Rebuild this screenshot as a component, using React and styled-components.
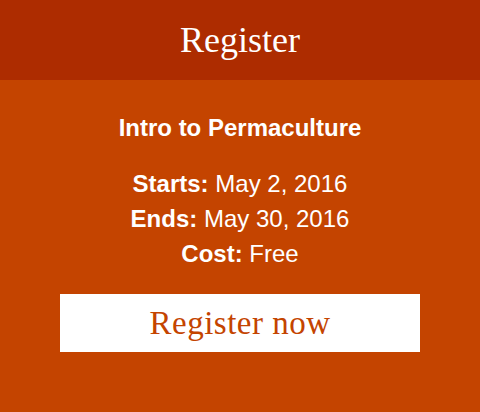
import styled, { createGlobalStyle } from "styled-components";

const GlobalStyle = createGlobalStyle`
  html, body {
    margin: 0;
    padding: 0;
    background: #c44400;
  }
`;

const Card = styled.section`
  width: 480px;
  height: 412px;
  background: #c44400;
  color: #fff;
  display: flex;
  flex-direction: column;
`;

const Header = styled.header`
  height: 80px;
  background: #ad2c00;
  display: flex;
  align-items: center;
  justify-content: center;
  h1 {
    margin: 0;
    font-family: "Liberation Serif", serif;
    font-weight: normal;
    font-size: 36px;
    line-height: 1;
  }
`;

const Body = styled.div`
  padding: 30px 60px 0;
  display: flex;
  flex-direction: column;
  align-items: stretch;
  text-align: center;
  font-family: "Liberation Sans", Arial, sans-serif;
  font-size: 24px;
  line-height: 35px;
`;

const Title = styled.h2`
  margin: 0 0 21px;
  font-size: 24px;
  font-weight: bold;
`;

const Details = styled.ul`
  list-style: none;
  margin: 0;
  padding: 0;
  b {
    font-weight: bold;
  }
`;

const Button = styled.a`
  margin-top: 23px;
  height: 58px;
  background: #fff;
  color: #c44400;
  display: flex;
  align-items: center;
  justify-content: center;
  font-family: "Liberation Serif", serif;
  font-size: 33px;
  letter-spacing: 0.5px;
  text-decoration: none;
  cursor: pointer;
`;

const details = [
  { label: "Starts:", value: "May 2, 2016" },
  { label: "Ends:", value: "May 30, 2016" },
  { label: "Cost:", value: "Free" },
];

const App = () => {
  return (
    <>
      <GlobalStyle />
      <Card>
        <Header>
          <h1>Register</h1>
        </Header>
        <Body>
          <Title>Intro to Permaculture</Title>
          <Details>
            {details.map((d) => (
              <li key={d.label}>
                <b>{d.label}</b> {d.value}
              </li>
            ))}
          </Details>
          <Button>Register now</Button>
        </Body>
      </Card>
    </>
  );
};

export default App;
